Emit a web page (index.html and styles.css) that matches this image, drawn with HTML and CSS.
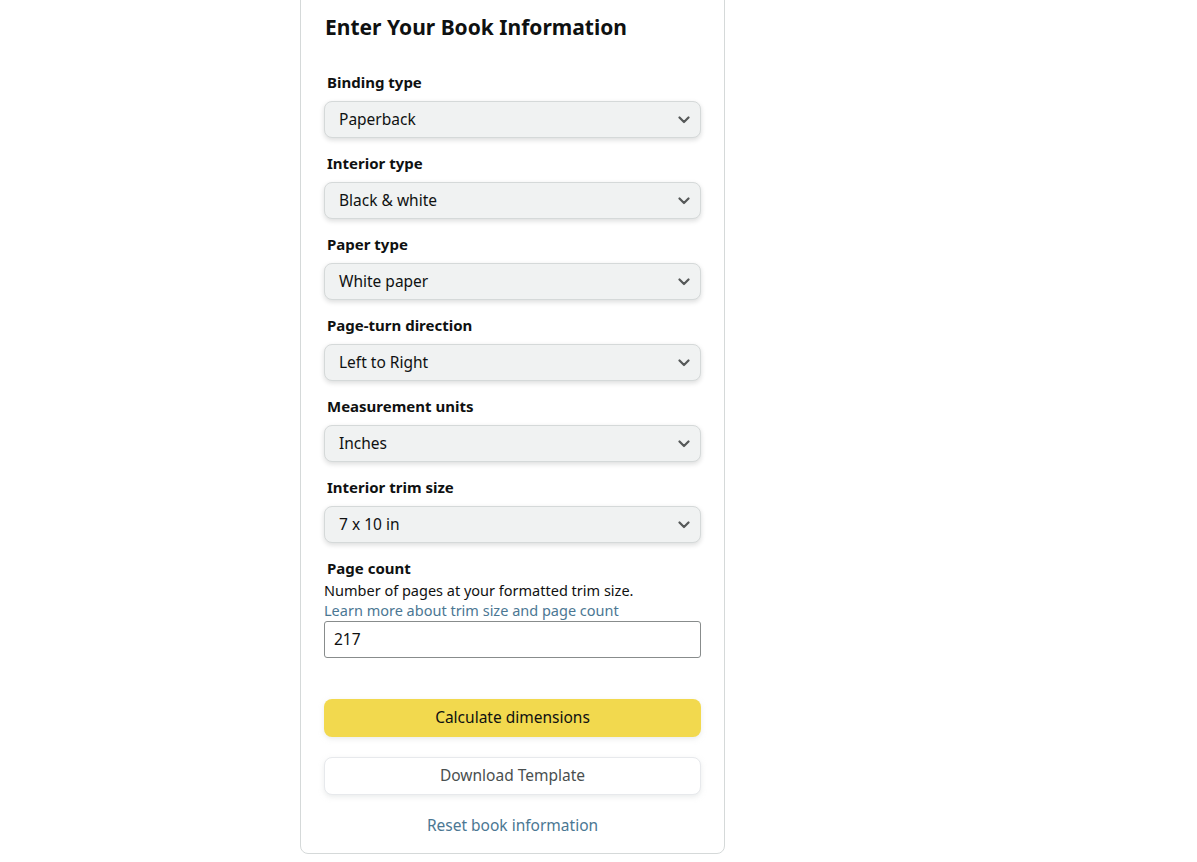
FILE: index.html
```html
<!DOCTYPE html>
<html>
<head>
<meta charset="utf-8">
<link rel="stylesheet" href="styles.css">
</head>
<body>
<div class="card">
  <h1 class="title">Enter Your Book Information</h1>

  <div class="field">
    <div class="label">Binding type</div>
    <div class="select"><span>Paperback</span><svg class="chev" viewBox="0 0 12 8"><path d="M1.5 1.5 L6 6 L10.5 1.5" fill="none" stroke="#565959" stroke-width="2.2" stroke-linecap="round" stroke-linejoin="round"/></svg></div>
  </div>
  <div class="field">
    <div class="label">Interior type</div>
    <div class="select"><span>Black &amp; white</span><svg class="chev" viewBox="0 0 12 8"><path d="M1.5 1.5 L6 6 L10.5 1.5" fill="none" stroke="#565959" stroke-width="2.2" stroke-linecap="round" stroke-linejoin="round"/></svg></div>
  </div>
  <div class="field">
    <div class="label">Paper type</div>
    <div class="select"><span>White paper</span><svg class="chev" viewBox="0 0 12 8"><path d="M1.5 1.5 L6 6 L10.5 1.5" fill="none" stroke="#565959" stroke-width="2.2" stroke-linecap="round" stroke-linejoin="round"/></svg></div>
  </div>
  <div class="field">
    <div class="label">Page-turn direction</div>
    <div class="select"><span>Left to Right</span><svg class="chev" viewBox="0 0 12 8"><path d="M1.5 1.5 L6 6 L10.5 1.5" fill="none" stroke="#565959" stroke-width="2.2" stroke-linecap="round" stroke-linejoin="round"/></svg></div>
  </div>
  <div class="field">
    <div class="label">Measurement units</div>
    <div class="select"><span>Inches</span><svg class="chev" viewBox="0 0 12 8"><path d="M1.5 1.5 L6 6 L10.5 1.5" fill="none" stroke="#565959" stroke-width="2.2" stroke-linecap="round" stroke-linejoin="round"/></svg></div>
  </div>
  <div class="field">
    <div class="label">Interior trim size</div>
    <div class="select"><span>7 x 10 in</span><svg class="chev" viewBox="0 0 12 8"><path d="M1.5 1.5 L6 6 L10.5 1.5" fill="none" stroke="#565959" stroke-width="2.2" stroke-linecap="round" stroke-linejoin="round"/></svg></div>
  </div>
  <div class="field pc">
    <div class="label">Page count</div>
    <div class="desc">Number of pages at your formatted trim size.</div>
    <a class="link">Learn more about trim size and page count</a>
    <div class="input">217</div>
  </div>

  <div class="btn primary">Calculate dimensions</div>
  <div class="btn secondary">Download Template</div>
  <div class="reset">Reset book information</div>
</div>
</body>
</html>
```
FILE: styles.css
```css
html, body {
  margin: 0;
  padding: 0;
  background: #ffffff;
}
body {
  font-family: "Noto Sans", "Open Sans", "Liberation Sans", Arial, sans-serif;
  color: #0f1111;
}
.card {
  box-sizing: border-box;
  width: 425px;
  margin: -11px 0 0 300px;
  border: 1px solid #d5d9d9;
  border-radius: 8px;
  padding: 22px 23px 17px 23px;
}
.title {
  margin: 0 0 29px 1px;
  font-size: 21px;
  font-weight: 700;
  line-height: 30px;
  color: #0f1111;
}
.field {
  margin-bottom: 14px;
}
.label {
  font-size: 15px;
  font-weight: 700;
  line-height: 22px;
  padding-left: 3px;
  margin-bottom: 8px;
}
.select {
  box-sizing: border-box;
  height: 37px;
  background: #f0f2f2;
  border: 1px solid #d5d9d9;
  border-radius: 8px;
  box-shadow: 0 2px 5px rgba(15, 17, 17, 0.15);
  display: flex;
  align-items: center;
  justify-content: space-between;
  padding: 0 10px 2px 14px;
  font-size: 15.5px;
  color: #0f1111;
}
.chev {
  width: 12px;
  height: 8px;
  margin-top: 2px;
}
.pc .label {
  margin-bottom: 1px;
}
.desc {
  font-size: 14.5px;
  line-height: 20px;
}
.link {
  display: block;
  font-size: 14.5px;
  line-height: 20px;
  color: #4b7793;
  margin-top: 0;
}
.input {
  box-sizing: border-box;
  height: 37px;
  border: 1px solid #888c8c;
  border-radius: 3px;
  padding: 0 9px 2px 9px;
  display: flex;
  align-items: center;
  font-size: 15.5px;
  margin-top: 1px;
}
.pc {
  margin-bottom: 41px;
}
.btn {
  box-sizing: border-box;
  height: 38px;
  border-radius: 8px;
  display: flex;
  align-items: center;
  justify-content: center;
  font-size: 15.5px;
  padding-bottom: 2px;
}
.primary {
  background: #f2d94e;
  color: #0f1111;
  box-shadow: 0 2px 5px rgba(213, 217, 217, 0.5);
}
.secondary {
  margin-top: 20px;
  background: #ffffff;
  border: 1px solid #e7e9ec;
  color: #4a4f4f;
  box-shadow: 0 2px 5px rgba(213, 217, 217, 0.5);
}
.reset {
  margin-top: 19px;
  text-align: center;
  font-size: 15.5px;
  line-height: 22px;
  color: #4b7793;
}
```
